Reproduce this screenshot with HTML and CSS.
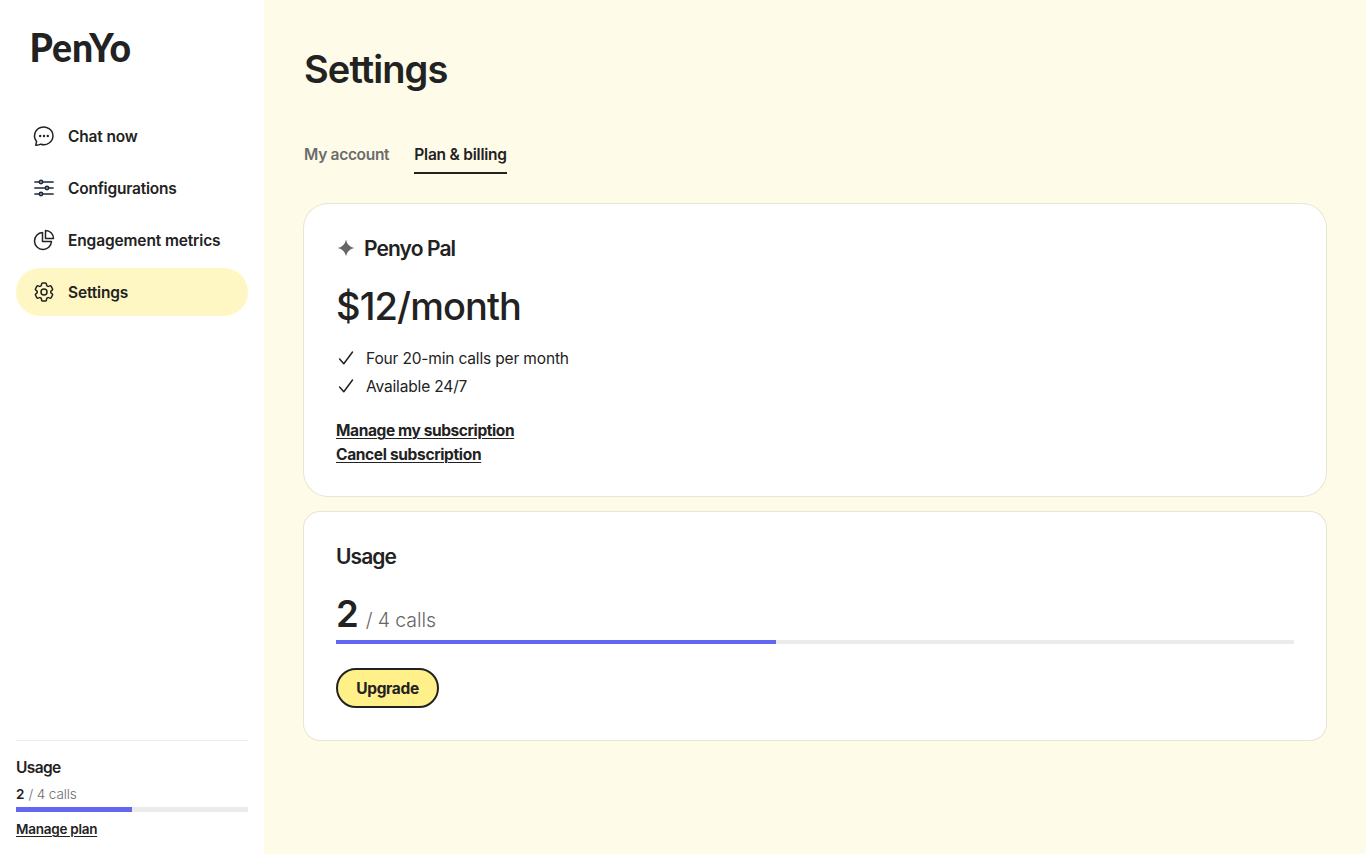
FILE: index.html
```html
<!DOCTYPE html>
<html lang="en">
<head>
<meta charset="utf-8">
<title>PenYo – Settings</title>
<link rel="stylesheet" href="styles.css">
</head>
<body>
<div class="app">
  <aside class="sidebar">
    <svg class="logo" width="100" height="40" viewBox="0 0 100 40" role="img" aria-label="PenYo"><text x="-2.5" y="34" textLength="101.5" lengthAdjust="spacingAndGlyphs">PenYo</text></svg>
    <nav class="nav">
      <a class="nav-item"><svg class="icon" viewBox="0 0 24 24"><path d="M3.8 21.2 4.6 17.4A9.2 8.8 0 1 1 8.8 20.2Q6.8 21.3 3.8 21.2Z"/><g class="dots"><circle cx="8.2" cy="12" r="1.2"/><circle cx="12" cy="12" r="1.2"/><circle cx="15.8" cy="12" r="1.2"/></g></svg><span class="t-chat">Chat now</span></a>
      <a class="nav-item"><svg class="icon navy" viewBox="0 0 24 24"><path d="M3 6h4.2M10.8 6H21M3 12h10.2M16.8 12H21M3 18h4.2M10.8 18H21"/><circle cx="9" cy="6" r="1.6"/><circle cx="15" cy="12" r="1.6"/><circle cx="9" cy="18" r="1.6"/></svg><span class="t-config">Configurations</span></a>
      <a class="nav-item"><svg class="icon" viewBox="0 0 24 24"><path d="M10.5 4.5A8.5 8.5 0 1 0 19.5 13.5H10.5Z"/><path d="M13.5 2.5V10.5H21.5A8 8 0 0 0 13.5 2.5Z"/></svg><span class="t-metrics">Engagement metrics</span></a>
      <a class="nav-item active"><svg class="icon" viewBox="0 0 24 24"><path d="M9.594 3.94c.09-.542.56-.94 1.11-.94h2.593c.55 0 1.02.398 1.11.94l.213 1.281c.063.374.313.686.645.87.074.04.147.083.22.127.325.196.72.257 1.075.124l1.217-.456a1.125 1.125 0 0 1 1.37.49l1.296 2.247a1.125 1.125 0 0 1-.26 1.431l-1.003.827c-.293.241-.438.613-.43.992a7.723 7.723 0 0 1 0 .255c-.008.378.137.75.43.991l1.004.827c.424.35.534.955.26 1.43l-1.298 2.247a1.125 1.125 0 0 1-1.369.491l-1.217-.456c-.355-.133-.75-.072-1.076.124a6.47 6.47 0 0 1-.22.128c-.331.183-.581.495-.644.869l-.213 1.281c-.09.543-.56.94-1.11.94h-2.594c-.55 0-1.019-.398-1.11-.94l-.213-1.281c-.062-.374-.312-.686-.644-.87a6.52 6.52 0 0 1-.22-.127c-.325-.196-.72-.257-1.076-.124l-1.217.456a1.125 1.125 0 0 1-1.369-.49l-1.297-2.247a1.125 1.125 0 0 1 .26-1.431l1.004-.827c.292-.24.437-.613.43-.991a6.932 6.932 0 0 1 0-.255c.007-.38-.138-.751-.43-.992l-1.004-.827a1.125 1.125 0 0 1-.26-1.43l1.297-2.247a1.125 1.125 0 0 1 1.37-.491l1.216.456c.356.133.751.072 1.076-.124.072-.044.146-.086.22-.128.332-.183.582-.495.644-.869l.214-1.28Z"/><circle cx="12" cy="12" r="3"/></svg><span class="t-settings">Settings</span></a>
    </nav>
    <section class="side-usage">
      <h2 class="side-title">Usage</h2>
      <p class="side-count"><b>2</b><span>/ 4 calls</span></p>
      <div class="bar side-bar"><div class="fill" style="width:50%"></div></div>
      <a class="side-link">Manage plan</a>
    </section>
  </aside>
  <main class="main">
    <h1 class="title">Settings</h1>
    <div class="tabs"><a class="tab t-account">My account</a><a class="tab selected t-plan">Plan &amp; billing</a></div>
    <section class="card plan">
      <h2 class="plan-name"><svg class="spark" viewBox="0 0 20 20"><path d="M10 1.8Q11.5 8.5 18.2 10Q11.5 11.5 10 18.2Q8.5 11.5 1.8 10Q8.5 8.5 10 1.8Z"/></svg><span>Penyo Pal</span></h2>
      <p class="price">$12/month</p>
      <ul class="features">
        <li><svg class="check" viewBox="0 0 20 20"><path d="M3.6 11 7.8 15.8 16.5 4"/></svg><span class="t-four">Four 20-min calls per month</span></li>
        <li><svg class="check" viewBox="0 0 20 20"><path d="M3.6 11 7.8 15.8 16.5 4"/></svg><span class="t-avail">Available 24/7</span></li>
      </ul>
      <div class="links"><a class="t-manage">Manage my subscription</a><a class="t-cancel">Cancel subscription</a></div>
    </section>
    <section class="card usage">
      <h2 class="usage-title">Usage</h2>
      <p class="count"><b>2</b><span>/ 4 calls</span></p>
      <div class="bar"><div class="fill" style="width:45.93%"></div></div>
      <button class="upgrade">Upgrade</button>
    </section>
  </main>
</div>
</body>
</html>
```
FILE: styles.css
```css
* { box-sizing: border-box; }
body { margin: 0; font-family: Inter, "Liberation Sans", sans-serif; color: #222; font-size: 16px; }
h1, h2, p, ul { margin: 0; padding: 0; }
.app { display: flex; height: 854px; background: #fefbe8; }
.sidebar { width: 264px; padding: 28px 16px 0; background: #fff; display: flex; flex-direction: column; }
.logo { display: block; margin-left: 16px; overflow: visible; }
.logo text { font: 900 39px Lato, sans-serif; fill: #222; }
.nav { display: flex; flex-direction: column; gap: 4px; margin-top: 44px; }
.nav-item { height: 48px; padding: 0 16px; display: flex; align-items: center; gap: 12px; border-radius: 24px; font-weight: 600; font-size: 15.5px; white-space: nowrap; }
.nav-item.active { background: #fef7c3; }
.icon { width: 24px; height: 24px; flex: none; fill: none; stroke: #222; stroke-width: 1.5; stroke-linecap: round; stroke-linejoin: round; }
.icon.navy { stroke: #1e293b; stroke-width: 1.7; }
.dots { fill: #222; stroke: none; }
.t-chat { letter-spacing: -0.15px; }
.t-config { letter-spacing: -0.22px; }
.t-metrics { letter-spacing: -0.13px; }
.t-settings { letter-spacing: -0.17px; }
.side-usage { margin-top: auto; height: 114px; border-top: 1px solid #ebebeb; padding-top: 15px; display: flex; flex-direction: column; align-items: flex-start; }
.side-title { font-size: 15.5px; font-weight: 600; line-height: 24px; letter-spacing: -0.6px; }
.side-count { display: flex; gap: 4px; font-size: 13.5px; line-height: 20px; margin-top: 4px; }
.side-count b { font-weight: 600; }
.side-count span { color: #6b6b6b; font-weight: 300; letter-spacing: -0.1px; }
.bar { width: 100%; height: 4px; background: #ebebeb; }
.side-bar { height: 5px; margin-top: 3px; }
.fill { height: 100%; background: #6366f1; }
.side-link { font-size: 13.5px; font-weight: 600; line-height: 20px; margin-top: 7px; letter-spacing: -0.25px; text-decoration: underline; text-decoration-thickness: 1px; text-underline-offset: 2px; }
.main { flex: 1; padding: 45px 40px 0; }
.title { font-size: 38px; line-height: 48px; font-weight: 600; letter-spacing: -0.9px; }
.tabs { display: flex; gap: 25px; margin-top: 49px; }
.tab { height: 32px; line-height: 26px; font-size: 15.5px; font-weight: 600; color: #6b6b6b; white-space: nowrap; }
.tab.selected { color: #222; border-bottom: 2px solid #222; }
.t-account { letter-spacing: -0.3px; }
.t-plan { letter-spacing: -0.22px; }
.card { background: #fff; box-shadow: 0 0 0 1px #e8e5d2; padding: 32px; }
.plan { height: 292px; margin-top: 30px; border-radius: 24px; }
.usage { height: 228px; margin-top: 16px; border-radius: 16px; padding-top: 30px; }
.plan-name { display: flex; align-items: center; gap: 8px; height: 24px; font-size: 21px; font-weight: 600; letter-spacing: -0.9px; }
.spark { width: 20px; height: 20px; fill: #666; }
.price { margin-top: 22px; font-size: 38px; line-height: 48px; font-weight: 500; letter-spacing: -0.9px; }
.features { list-style: none; margin-top: 14px; }
.features li { display: flex; align-items: center; gap: 10px; height: 28px; font-size: 15.5px; }
.check { width: 20px; height: 20px; fill: none; stroke: #222; stroke-width: 1.5; stroke-linecap: round; stroke-linejoin: round; }
.t-four { letter-spacing: -0.16px; }
.t-avail { letter-spacing: -0.16px; }
.links { display: flex; flex-direction: column; align-items: flex-start; margin-top: 19px; font-size: 15.5px; line-height: 24px; font-weight: 700; }
.links a { text-decoration: underline; text-decoration-thickness: 1px; text-underline-offset: 2px; }
.t-manage { letter-spacing: -0.4px; }
.t-cancel { letter-spacing: -0.34px; }
.usage-title { font-size: 21px; line-height: 30px; font-weight: 600; letter-spacing: -0.9px; }
.count { display: flex; align-items: baseline; gap: 9px; margin-top: 18px; height: 50px; line-height: 48px; }
.count b { font-size: 36.5px; font-weight: 600; letter-spacing: -2px; }
.count span { font-size: 19.5px; font-weight: 300; color: #666; letter-spacing: -0.1px; }
.upgrade { margin-top: 24px; width: 103px; height: 40px; display: block; border: 2px solid #222; border-radius: 20px; background: #fff08a; color: #222; font: 700 15.5px Inter, sans-serif; letter-spacing: -0.35px; padding: 0; }
```
